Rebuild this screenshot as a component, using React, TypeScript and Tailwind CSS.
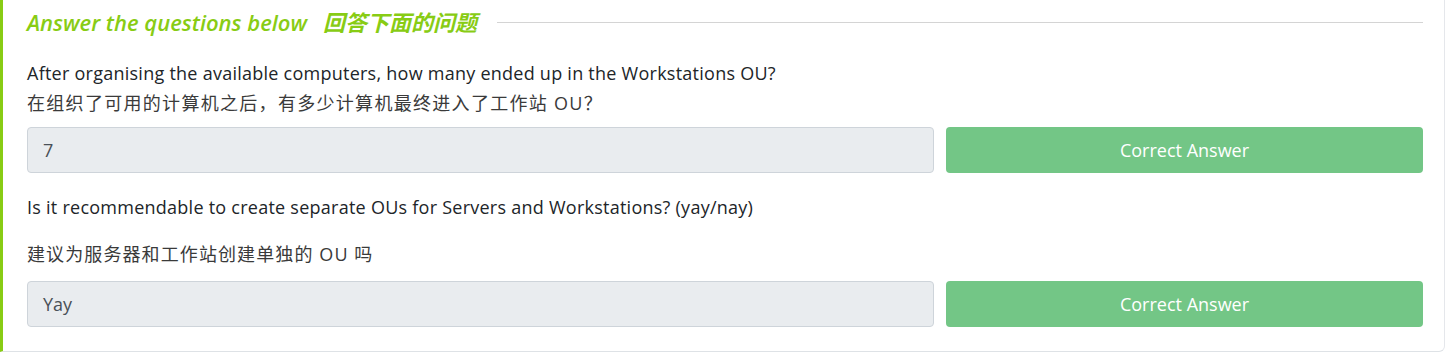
import React from "react";

const questions = [
  {
    en: "After organising the available computers, how many ended up in the Workstations OU?",
    zh: "在组织了可用的计算机之后，有多少计算机最终进入了工作站 OU？",
    answer: "7",
    split: false,
  },
  {
    en: "Is it recommendable to create separate OUs for Servers and Workstations? (yay/nay)",
    zh: "建议为服务器和工作站创建单独的 OU 吗",
    answer: "Yay",
    split: true,
  },
];

const App: React.FC = () => {
  return (
    <div
      className="h-[354px] w-[1448px] bg-white overflow-hidden"
      style={{ fontFamily: '"Open Sans", "Noto Sans CJK SC", sans-serif' }}
    >
      <div className="border-l-[3px] border-l-[#88cc14] border-b border-b-[#dee2e6] border-r border-r-[#e5e7eb] rounded-br-md mr-[3px] h-[352px] pl-[24px] pr-[21px]">
        <div className="flex items-center h-[44px]">
          <h2 className="text-[22px] font-semibold italic text-[#88cc14] whitespace-nowrap">
            Answer the questions below
            <span className="ml-[16px]">回答下面的问题</span>
          </h2>
          <div className="flex-1 ml-[20px] h-px bg-[#d4d4d4]" />
        </div>

        {questions.map((q, i) => (
          <div key={i} className={i === 0 ? "mt-[14px]" : "mt-[19px]"}>
            {q.split ? (
              <div className="text-[18px] text-[#212529] leading-[30px]">
                <p className="tracking-[0.25px]">{q.en}</p>
                <p className="mt-[17px] text-[#3a3a3a] tracking-[1.1px]">{q.zh}</p>
              </div>
            ) : (
              <div className="text-[18px] text-[#212529] leading-[30px]">
                <p className="tracking-[0.25px]">{q.en}</p>
                <p className="text-[#3a3a3a] tracking-[1.3px]">{q.zh}</p>
              </div>
            )}
            <div className={`flex gap-[12px] ${q.split ? "mt-[12px]" : "mt-[9px]"}`}>
              <div className="flex-1 h-[46px] rounded-[4px] border border-[#ced4da] bg-[#e9ecef] flex items-center px-[15px] text-[18px] text-[#495057]">
                {q.answer}
              </div>
              <button className="w-[477px] h-[46px] rounded-[4px] bg-[#73c686] text-white text-[18px] font-medium">
                Correct Answer
              </button>
            </div>
          </div>
        ))}
      </div>
    </div>
  );
};

export default App;
